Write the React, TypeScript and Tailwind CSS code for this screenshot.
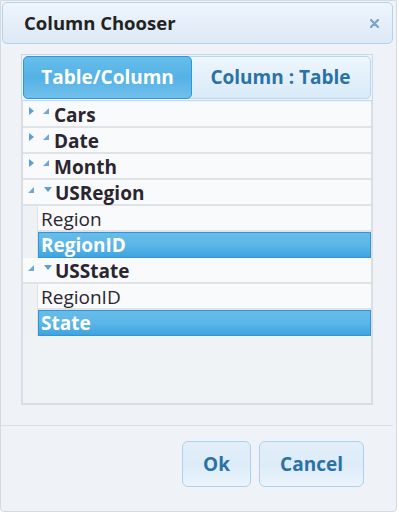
import React from "react";

const font = { fontFamily: '"Open Sans", "DejaVu Sans", sans-serif' };

function RightTri() {
  return (
    <svg width="6" height="8" viewBox="0 0 6 8" className="block">
      <path d="M0 0 L5 4 L0 8 Z" fill="#5b9fd6" />
    </svg>
  );
}
function CornerTri() {
  return (
    <svg width="6" height="6" viewBox="0 0 6 6" className="block">
      <path d="M6 0 L6 6 L0 6 Z" fill="#6ea8d8" />
    </svg>
  );
}
function DownTri() {
  return (
    <svg width="8" height="5" viewBox="0 0 8 5" className="block">
      <path d="M0 0 L8 0 L4 5 Z" fill="#5b9fd6" />
    </svg>
  );
}

function TopRow({ label, expanded }: { label: string; expanded?: boolean }) {
  return (
    <div className="flex h-[26px] items-center border-b-2 border-[#dfe2e6] bg-[#f9fafc]">
      {expanded ? (
        <>
          <div className="ml-[5px] mt-[-4px] w-[6px]">
            <CornerTri />
          </div>
          <div className="ml-[10px] mt-[-6px] w-[8px]">
            <DownTri />
          </div>
          <span className="ml-[3px] mt-[2px] text-[19px] font-bold text-[#2b2530] leading-none">{label}</span>
        </>
      ) : (
        <>
          <div className="ml-[6px] mt-[-6px] w-[6px]">
            <RightTri />
          </div>
          <div className="ml-[8px] mt-[-6px] w-[6px]">
            <CornerTri />
          </div>
          <span className="ml-[5px] mt-[2px] text-[19px] font-bold text-[#2b2530] leading-none">{label}</span>
        </>
      )}
    </div>
  );
}

function ChildRow({ label, selected }: { label: string; selected?: boolean }) {
  return (
    <div className="flex h-[26px]">
      <div className="w-[15px] shrink-0 border-r border-[#dfe2e6] bg-[#eff2f5]" />
      {selected ? (
        <div className="flex flex-1 items-center border border-[#3693d8] bg-gradient-to-b from-[#66bdea] via-[#5cb6e7] to-[#3da4e0] pl-[2px]">
          <span className="mt-[1px] text-[19px] font-bold text-white leading-none">{label}</span>
        </div>
      ) : (
        <div className="flex flex-1 items-center border-b-2 border-[#dfe2e6] bg-[#f9fafc] pl-[3px]">
          <span className="mt-[2px] text-[19px] text-[#2b2530] leading-none">{label}</span>
        </div>
      )}
    </div>
  );
}

export default function App() {
  return (
    <div className="h-[514px] w-[399px] bg-white" style={font}>
      <div className="flex h-[512px] w-[397px] flex-col rounded-b-[4px] border border-[#d6dade] bg-[#eff3f7]">
        <div className="ml-[1px] mr-[3px] mt-[1px] flex h-[42px] items-center justify-between rounded-[5px] border border-[#b3d4ee] bg-gradient-to-b from-[#eef5fc] to-[#dde9f6] pl-[21px] pr-[13px]">
          <span className="text-[18.5px] font-bold text-[#222222]">Column Chooser</span>
          <svg width="9" height="9" viewBox="0 0 9 9" className="block">
            <path d="M1 1 L8 8 M8 1 L1 8" stroke="#7da5c8" strokeWidth="2.4" strokeLinecap="round" />
          </svg>
        </div>
        <div className="mt-[10px] pl-[20px] pr-[23px]">
          <div className="h-[47px] border border-[#c2dcef] p-[1px]">
            <div className="flex h-full rounded-[5px] border border-[#b7d6ee] bg-gradient-to-b from-[#eef6fd] via-[#e3f0fa] to-[#d8eaf8]">
              <div className="-m-[1px] flex w-[169px] items-center justify-center rounded-[5px] border border-[#2f95dc] bg-gradient-to-b from-[#66bdea] via-[#55b2e6] to-[#70c0ec]">
                <span className="text-[19px] font-bold text-white">Table/Column</span>
              </div>
              <div className="flex flex-1 items-center justify-center">
                <span className="text-[19px] font-bold text-[#2a72a6]">Column : Table</span>
              </div>
            </div>
          </div>
          <div className="h-[304px] border-2 border-t-0 border-[#dadde1] bg-[#f0f3f6] pt-[1px]">
            <TopRow label="Cars" />
            <TopRow label="Date" />
            <TopRow label="Month" />
            <TopRow label="USRegion" expanded />
            <ChildRow label="Region" />
            <ChildRow label="RegionID" selected />
            <TopRow label="USState" expanded />
            <ChildRow label="RegionID" />
            <ChildRow label="State" selected />
          </div>
        </div>
        <div className="mr-[3px] mt-[20px] border-t border-[#dbdee2]" />
        <div className="mt-[15px] flex justify-end gap-[8px] pr-[32px]">
          <button className="flex h-[46px] w-[69px] items-center justify-center rounded-[6px] border border-[#acd1ee] bg-gradient-to-b from-[#e3eff9] via-[#dcecf8] to-[#eaf4fd] text-[19px] font-bold text-[#2a72a6]">
            Ok
          </button>
          <button className="flex h-[46px] w-[105px] items-center justify-center rounded-[6px] border border-[#acd1ee] bg-gradient-to-b from-[#e3eff9] via-[#dcecf8] to-[#eaf4fd] text-[19px] font-bold text-[#2a72a6]">
            Cancel
          </button>
        </div>
      </div>
    </div>
  );
}
